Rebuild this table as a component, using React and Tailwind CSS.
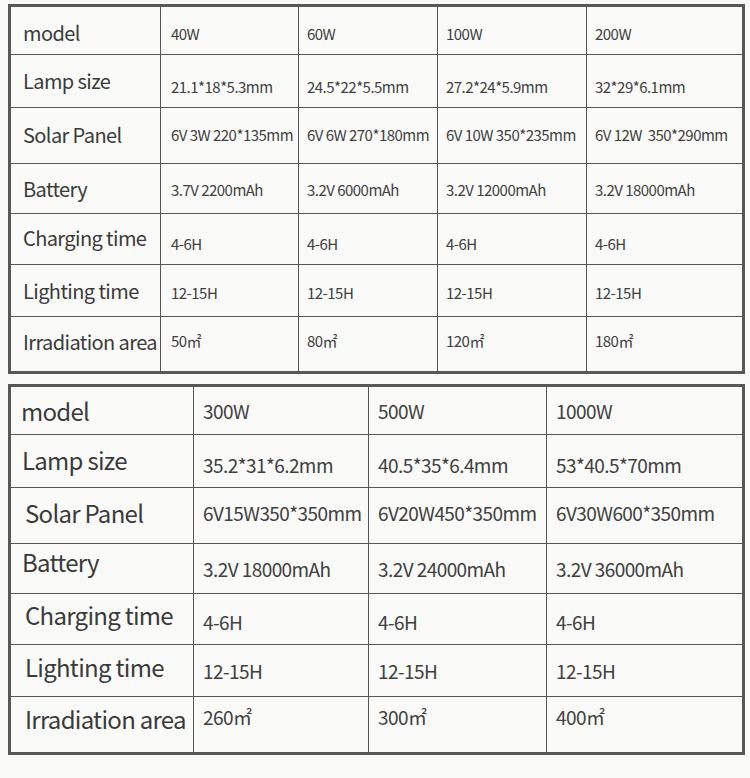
import React from 'react'

const FONT = "font-['Noto_Sans_CJK_SC','Noto_Sans',sans-serif]"

// first sheet: 40W - 200W
const SMALL = {
  cols: 'grid-cols-[150px_138px_139px_149px_1fr]',
  label: 'text-[20px] tracking-[-0.03em]',
  value: 'pl-[8px] text-[15px] tracking-[-0.035em]',
  firstValue: 'pl-[10px]',
  rows: [
    { h: 'h-[48px]', lp: 'pl-[12px]', lo: 'translate-y-[2px]', vo: 'translate-y-[4px]', label: 'model', values: ['40W', '60W', '100W', '200W'] },
    { h: 'h-[53px]', lp: 'pl-[12px]', lo: 'translate-y-[0px]', vo: 'translate-y-[6px]', label: 'Lamp size', values: ['21.1*18*5.3mm', '24.5*22*5.5mm', '27.2*24*5.9mm', '32*29*6.1mm'] },
    { h: 'h-[56px]', lp: 'pl-[12px]', lo: '-translate-y-[1px]', vo: 'translate-y-[0px]', label: 'Solar Panel', values: ['6V 3W 220*135mm', '6V 6W 270*180mm', '6V 10W 350*235mm', '6V 12W  350*290mm'] },
    { h: 'h-[50px]', lp: 'pl-[12px]', lo: 'translate-y-[0px]', vo: 'translate-y-[2px]', label: 'Battery', values: ['3.7V 2200mAh', '3.2V 6000mAh', '3.2V 12000mAh', '3.2V 18000mAh'] },
    { h: 'h-[51px]', lp: 'pl-[12px]', lo: '-translate-y-[1px]', vo: 'translate-y-[5px]', label: 'Charging time', values: ['4-6H', '4-6H', '4-6H', '4-6H'] },
    { h: 'h-[52px]', lp: 'pl-[12px]', lo: 'translate-y-[0px]', vo: 'translate-y-[3px]', label: 'Lighting time', values: ['12-15H', '12-15H', '12-15H', '12-15H'] },
    { h: 'h-[54px]', lp: 'pl-[12px]', lo: '-translate-y-[2px]', vo: '-translate-y-[3px]', label: 'Irradiation area', values: ['50㎡', '80㎡', '120㎡', '180㎡'] },
  ],
}

// second sheet: 300W - 1000W
const LARGE = {
  cols: 'grid-cols-[183px_175px_178px_1fr]',
  label: 'text-[24px] tracking-[-0.03em]',
  value: 'pl-[9px] text-[19px] tracking-[-0.03em]',
  firstValue: 'pl-[8px]',
  rows: [
    { h: 'h-[48px]', lp: 'pl-[10px]', lo: 'translate-y-[0px]', vo: 'translate-y-[1px]', label: 'model', values: ['300W', '500W', '1000W'] },
    { h: 'h-[53px]', lp: 'pl-[11px]', lo: '-translate-y-[1px]', vo: 'translate-y-[4px]', label: 'Lamp size', values: ['35.2*31*6.2mm', '40.5*35*6.4mm', '53*40.5*70mm'] },
    { h: 'h-[56px]', lp: 'pl-[14px]', lo: '-translate-y-[3px]', vo: '-translate-y-[2px]', label: 'Solar Panel', values: ['6V15W350*350mm', '6V20W450*350mm', '6V30W600*350mm'] },
    { h: 'h-[50px]', lp: 'pl-[11px]', lo: '-translate-y-[7px]', vo: 'translate-y-[1px]', label: 'Battery', values: ['3.2V 18000mAh', '3.2V 24000mAh', '3.2V 36000mAh'] },
    { h: 'h-[51px]', lp: 'pl-[14px]', lo: '-translate-y-[4px]', vo: 'translate-y-[3px]', label: 'Charging time', values: ['4-6H', '4-6H', '4-6H'] },
    { h: 'h-[52px]', lp: 'pl-[14px]', lo: '-translate-y-[4px]', vo: 'translate-y-[1px]', label: 'Lighting time', values: ['12-15H', '12-15H', '12-15H'] },
    { h: 'h-[55px]', lp: 'pl-[14px]', lo: '-translate-y-[6px]', vo: '-translate-y-[7px]', label: 'Irradiation area', values: ['260㎡', '300㎡', '400㎡'] },
  ],
}

function SpecSheet({ sheet, className }) {
  const last = sheet.rows.length - 1
  return (
    <div className={`w-[737px] border-[3px] border-[#585858] ${className}`}>
      {sheet.rows.map((row, r) => (
        <div key={row.label} className={`grid ${sheet.cols} ${row.h} ${r < last ? 'border-b border-[#575757]' : ''}`}>
          <div className={`flex items-center whitespace-nowrap border-r border-[#575757] text-[#3a3a3a] ${sheet.label} ${row.lp}`}>
            <span className={row.lo}>{row.label}</span>
          </div>
          {row.values.map((v, c) => (
            <div
              key={c}
              className={`flex items-center whitespace-pre text-[#404040] ${sheet.value} ${c === 0 ? sheet.firstValue : ''} ${c < row.values.length - 1 ? 'border-r border-[#575757]' : ''}`}
            >
              <span className={row.vo}>{v}</span>
            </div>
          ))}
        </div>
      ))}
    </div>
  )
}

export default function App() {
  return (
    <div className={`min-h-[778px] w-[750px] bg-[#fafaf8] pl-[8px] pt-[4px] ${FONT}`}>
      <SpecSheet sheet={SMALL} />
      <SpecSheet sheet={LARGE} className="mt-[10px]" />
    </div>
  )
}
